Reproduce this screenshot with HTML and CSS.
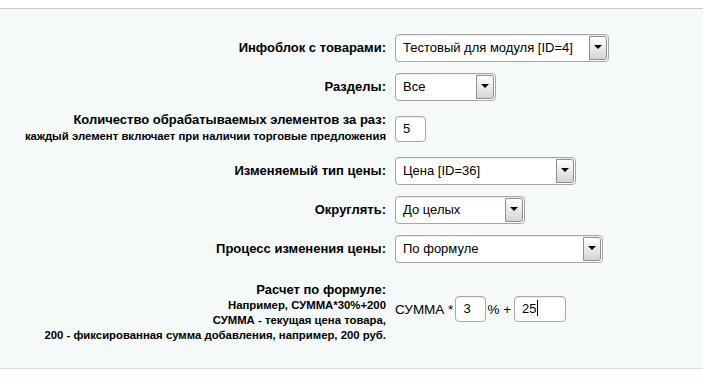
FILE: index.html
```html
<!DOCTYPE html>
<html lang="ru">
<head>
<meta charset="utf-8">
<link rel="stylesheet" href="styles.css">
</head>
<body>
<div class="panel">
  <div class="form">
    <div class="label">Инфоблок с товарами:</div>
    <div class="ctrl"><span class="select w213"><span class="val">Тестовый для модуля [ID=4]</span><span class="btn"><span class="arrow"></span></span></span></div>

    <div class="label">Разделы:</div>
    <div class="ctrl"><span class="select w100"><span class="val">Все</span><span class="btn"><span class="arrow"></span></span></span></div>

    <div class="label qty">Количество обрабатываемых элементов за раз:<div class="note">каждый элемент включает при наличии торговые предложения</div></div>
    <div class="ctrl"><span class="input w31">5</span></div>

    <div class="label">Изменяемый тип цены:</div>
    <div class="ctrl"><span class="select w180"><span class="val">Цена [ID=36]</span><span class="btn"><span class="arrow"></span></span></span></div>

    <div class="label">Округлять:</div>
    <div class="ctrl"><span class="select w129"><span class="val">До целых</span><span class="btn"><span class="arrow"></span></span></span></div>

    <div class="label">Процесс изменения цены:</div>
    <div class="ctrl"><span class="select w207"><span class="val">По формуле</span><span class="btn"><span class="arrow"></span></span></span></div>

    <div class="label formula">Расчет по формуле:<div class="note">Например, СУММА*30%+200</div><div class="note">СУММА - текущая цена товара,</div><div class="note">200 - фиксированная сумма добавления, например, 200 руб.</div></div>
    <div class="ctrl formula-ctrl"><span class="txt">СУММА *</span><span class="input w31">3</span><span class="txt pct">% +</span><span class="input w51">25<span class="caret"></span></span></div>
  </div>
</div>
</body>
</html>
```
FILE: styles.css
```css
html, body {
  margin: 0;
  padding: 0;
  background: #ffffff;
}
body {
  font-family: Arial, "Liberation Sans", sans-serif;
  color: #000;
}
.panel {
  margin-top: 8px;
  border-top: 1px solid #c6c8c8;
  border-bottom: 1px solid #d6e2e2;
  background: #f5f9f9;
  padding: 25px 0 25px 0;
  height: 309px;
  box-sizing: content-box;
}
.form {
  display: grid;
  grid-template-columns: 386px 1fr;
  column-gap: 9px;
  row-gap: 11px;
  align-items: center;
}
.label {
  text-align: right;
  font-weight: bold;
  font-size: 13px;
  line-height: 16px;
  color: #000;
}
.note {
  font-size: 11.35px;
  line-height: 16px;
}
.qty .note { padding-bottom: 2px; }
.formula {
  align-self: start;
  padding-top: 8px;
}
.formula .note { line-height: 15px; }
.ctrl {
  display: flex;
  align-items: center;
}
.select {
  display: flex;
  align-items: stretch;
  height: 26px;
  border: 1px solid #a5a5a5;
  border-radius: 4px;
  background: #fff;
  box-shadow: inset 0 1px 1px rgba(0,0,0,0.08);
  box-sizing: content-box;
}
.w213 { width: 212px; }
.w100 { width: 99px; }
.w180 { width: 179px; }
.w129 { width: 128px; }
.w207 { width: 206px; }
.val {
  flex: 1;
  padding-left: 7px;
  font-size: 13px;
  line-height: 26px;
  white-space: nowrap;
  overflow: hidden;
}
.btn {
  width: 16px;
  margin: 1px 1px 1px 0;
  border: 1px solid #8e8e8e;
  border-radius: 0 3px 3px 0;
  background: linear-gradient(#ffffff, #d4d4d4);
  display: flex;
  justify-content: center;
  align-items: center;
}
.arrow {
  width: 0;
  height: 0;
  border-left: 4px solid transparent;
  border-right: 4px solid transparent;
  border-top: 4px solid #000;
  margin-top: -2px;
}
.input {
  display: inline-block;
  border: 1px solid #a8a8a8;
  border-radius: 4px;
  background: #fff;
  box-shadow: inset 0 1px 1px rgba(0,0,0,0.08);
  font-size: 13px;
  line-height: 24px;
  padding-left: 7px;
  box-sizing: border-box;
  height: 26px;
}
.w31 { width: 31px; }
.w51 { width: 52px; }
.caret {
  display: inline-block;
  width: 1px;
  height: 16px;
  background: #000;
  vertical-align: -3px;
}
.formula-ctrl {
  align-self: start;
  padding-top: 22px;
}
.txt {
  font-size: 13.5px;
  margin-right: 2px;
}
.txt.pct { margin-left: 1px; margin-right: 3px; }
```
